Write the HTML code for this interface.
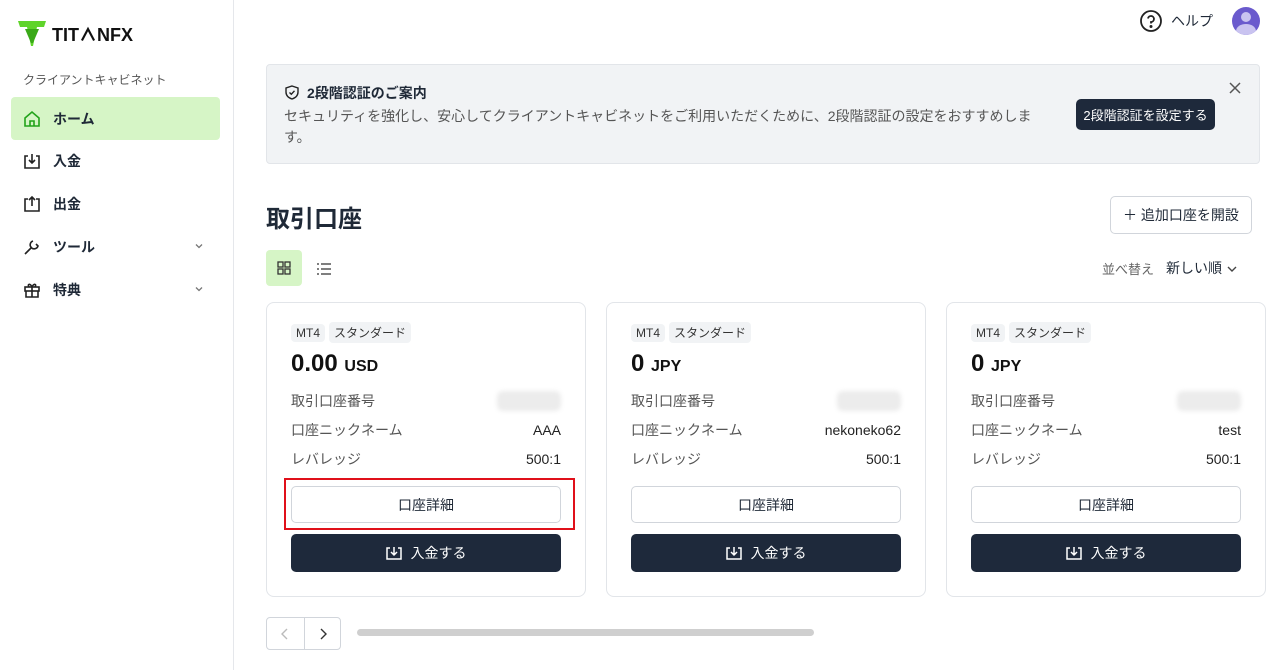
<!DOCTYPE html>
<html><head><meta charset="utf-8"><style>
*{box-sizing:border-box;margin:0;padding:0}
body{width:1278px;height:670px;overflow:hidden;background:#fff;font-family:"Liberation Sans","Noto Sans CJK JP",sans-serif;color:#1f2937;position:relative}
.side{position:absolute;left:0;top:0;width:234px;height:670px;border-right:1px solid #e5e7eb}
.logo{position:absolute;left:18px;top:21px;display:flex;align-items:center;gap:6px}
.logo b{font-size:18px;font-weight:900;letter-spacing:0;color:#111}
.cap{position:absolute;left:23px;top:71px;font-size:12px;color:#555}
.nav{position:absolute;left:11px;width:209px;height:43px;display:flex;align-items:center;padding-left:12px;font-size:14px;font-weight:bold;color:#1f2937;border-radius:4px}
.nav svg{margin-right:12px}
.nav.act{background:#d6f5c6}
.chev{position:absolute;left:182px;top:15px}
.a{position:absolute}
.banner{left:266px;top:64px;width:994px;height:100px;background:#f1f3f5;border:1px solid #e2e5e9;border-radius:4px}
.btn-dark{background:#1e293b;color:#fff;border-radius:5px;display:flex;align-items:center;justify-content:center;font-size:13px}
.card{top:302px;width:320px;height:295px;border:1px solid #e2e5e9;border-radius:8px}
.tag{display:inline-block;background:#f1f3f5;border-radius:4px;font-size:12px;padding:2px 5px;margin-right:4px;color:#333}
.row{position:absolute;left:24px;right:24px;display:flex;justify-content:space-between;font-size:14px;color:#555}
.row span:last-child{color:#222}
.blur{width:64px;height:20px;background:#ececec;border-radius:6px;filter:blur(2px)}
.det{position:absolute;left:24px;width:270px;top:183px;height:37px;border:1px solid #d1d5db;border-radius:5px;display:flex;align-items:center;justify-content:center;font-size:14px}
.dep{position:absolute;left:24px;width:270px;top:231px;height:38px;font-size:14px}
</style></head><body>
<div class="side">
 <div class="logo"><svg width="28" height="26" viewBox="0 0 28 26"><path d="M0 0H28L26 6H19L15 25H13L9 6H2Z" fill="#5fd42a"/><path d="M7 8H21L15 22H13Z" fill="#3aa918"/></svg><b>TIT∧NFX</b></div>
 <div class="cap">クライアントキャビネット</div>
 <div class="nav act" style="top:97px"><svg width="18" height="18" viewBox="0 0 18 18" fill="none" stroke="#22a31a" stroke-width="1.6"><path d="M2 8L9 2L16 8V16H2Z"/><path d="M7 16V11H11V16"/></svg>ホーム</div>
 <div class="nav" style="top:139px"><svg width="18" height="18" viewBox="0 0 18 18" fill="none" stroke="#222" stroke-width="1.6"><path d="M5 4H2V16H16V4H13"/><path d="M9 2V11M6 8L9 11L12 8"/></svg>入金</div>
 <div class="nav" style="top:182px"><svg width="18" height="18" viewBox="0 0 18 18" fill="none" stroke="#222" stroke-width="1.6"><path d="M5 4H2V16H16V4H13"/><path d="M9 11V2M6 5L9 2L12 5"/></svg>出金</div>
 <div class="nav" style="top:225px"><svg width="18" height="18" viewBox="0 0 18 18" fill="none" stroke="#222" stroke-width="1.6"><path d="M2 16L9 9M10 3A4 4 0 1 0 15 8L13 6"/></svg>ツール<svg class="chev" width="12" height="12" viewBox="0 0 12 12" fill="none" stroke="#777" stroke-width="1.3"><path d="M3 4.5L6 7.5L9 4.5"/></svg></div>
 <div class="nav" style="top:268px"><svg width="18" height="18" viewBox="0 0 18 18" fill="none" stroke="#222" stroke-width="1.6"><rect x="2" y="6" width="14" height="4"/><path d="M3 10V16H15V10M9 6V16M9 6C7 2 4 3 6 6M9 6C11 2 14 3 12 6"/></svg>特典<svg class="chev" width="12" height="12" viewBox="0 0 12 12" fill="none" stroke="#777" stroke-width="1.3"><path d="M3 4.5L6 7.5L9 4.5"/></svg></div>
</div>
<div class="a" style="left:1139px;top:9px"><svg width="24" height="24" viewBox="0 0 24 24" fill="none" stroke="#222" stroke-width="1.8"><circle cx="12" cy="12" r="10"/><path d="M9 9.5A3 3 0 1 1 12 13V14.5"/><circle cx="12" cy="17.5" r=".6" fill="#222"/></svg></div>
<div class="a" style="left:1171px;top:11px;font-size:14px">ヘルプ</div>
<div class="a" style="left:1232px;top:7px;width:28px;height:28px;border-radius:50%;background:#6a5acd;overflow:hidden"><div style="position:absolute;left:9px;top:5px;width:10px;height:10px;border-radius:50%;background:#c9c3f0"></div><div style="position:absolute;left:4px;top:17px;width:20px;height:14px;border-radius:50%;background:#c9c3f0"></div></div>
<div class="a banner">
 <div class="a" style="left:18px;top:20px"><svg width="14" height="15" viewBox="0 0 14 15" fill="none" stroke="#222" stroke-width="1.4"><path d="M7 1L13 3V7C13 11 10 13 7 14C4 13 1 11 1 7V3Z"/><path d="M4.5 7.5L6.3 9.2L9.5 5.8"/></svg></div>
 <div class="a" style="left:40px;top:18px;font-size:14px;font-weight:bold">2段階認証のご案内</div>
 <div class="a" style="left:17px;top:41px;width:760px;font-size:14px;color:#555;line-height:21px">セキュリティを強化し、安心してクライアントキャビネットをご利用いただくために、2段階認証の設定をおすすめします。</div>
 <div class="a btn-dark" style="left:809px;top:34px;width:139px;height:31px">2段階認証を設定する</div>
 <div class="a" style="left:962px;top:16px"><svg width="12" height="12" viewBox="0 0 12 12" stroke="#555" stroke-width="1.5"><path d="M1 1L11 11M11 1L1 11"/></svg></div>
</div>
<div class="a" style="left:266px;top:199px;font-size:24px;font-weight:bold">取引口座</div>
<div class="a" style="left:1110px;top:196px;width:142px;height:38px;border:1px solid #d1d5db;border-radius:5px;font-size:14px;display:flex;align-items:center;justify-content:center">＋ 追加口座を開設</div>
<div class="a" style="left:266px;top:250px;width:36px;height:36px;background:#d6f5c6;border-radius:4px"><svg style="position:absolute;left:11px;top:11px" width="14" height="14" viewBox="0 0 14 14" fill="none" stroke="#333" stroke-width="1.3"><rect x="1" y="1" width="5" height="5"/><rect x="8" y="1" width="5" height="5"/><rect x="1" y="8" width="5" height="5"/><rect x="8" y="8" width="5" height="5"/></svg></div>
<div class="a" style="left:317px;top:262px"><svg width="14" height="12" viewBox="0 0 14 12" stroke="#333" stroke-width="1.3"><path d="M4 1H14M4 6H14M4 11H14M0 1H2M0 6H2M0 11H2"/></svg></div>
<div class="a" style="left:1102px;top:259px;font-size:13px;color:#666">並べ替え</div>
<div class="a" style="left:1166px;top:258px;font-size:14px">新しい順</div>
<div class="a" style="left:1226px;top:262px"><svg width="12" height="12" viewBox="0 0 12 12" fill="none" stroke="#444" stroke-width="1.4"><path d="M2 4L6 8L10 4"/></svg></div>

<div class="a card" style="left:266px">
 <div class="a" style="left:24px;top:19px"><span class="tag">MT4</span><span class="tag">スタンダード</span></div>
 <div class="a" style="left:24px;top:47px;font-size:24px;font-weight:bold;color:#111">0.00 <span style="font-size:16px">USD</span></div>
 <div class="row" style="top:88px"><span>取引口座番号</span><div class="blur"></div></div>
 <div class="row" style="top:117px"><span>口座ニックネーム</span><span style="margin-top:2px">AAA</span></div>
 <div class="row" style="top:146px"><span>レバレッジ</span><span style="margin-top:2px">500:1</span></div>
 <div class="det">口座詳細</div>
 <div class="dep btn-dark"><svg width="16" height="14" viewBox="0 0 16 14" fill="none" stroke="#fff" stroke-width="1.5" style="margin-right:9px"><path d="M4 2H1V13H15V2H12"/><path d="M8 1V9M5 6L8 9L11 6"/></svg>入金する</div>
</div>
<div class="a" style="left:284px;top:478px;width:291px;height:52px;border:2.5px solid #e0101a"></div>
<div class="a card" style="left:606px">
 <div class="a" style="left:24px;top:19px"><span class="tag">MT4</span><span class="tag">スタンダード</span></div>
 <div class="a" style="left:24px;top:47px;font-size:24px;font-weight:bold;color:#111">0 <span style="font-size:16px">JPY</span></div>
 <div class="row" style="top:88px"><span>取引口座番号</span><div class="blur"></div></div>
 <div class="row" style="top:117px"><span>口座ニックネーム</span><span style="margin-top:2px">nekoneko62</span></div>
 <div class="row" style="top:146px"><span>レバレッジ</span><span style="margin-top:2px">500:1</span></div>
 <div class="det">口座詳細</div>
 <div class="dep btn-dark"><svg width="16" height="14" viewBox="0 0 16 14" fill="none" stroke="#fff" stroke-width="1.5" style="margin-right:9px"><path d="M4 2H1V13H15V2H12"/><path d="M8 1V9M5 6L8 9L11 6"/></svg>入金する</div>
</div>
<div class="a card" style="left:946px">
 <div class="a" style="left:24px;top:19px"><span class="tag">MT4</span><span class="tag">スタンダード</span></div>
 <div class="a" style="left:24px;top:47px;font-size:24px;font-weight:bold;color:#111">0 <span style="font-size:16px">JPY</span></div>
 <div class="row" style="top:88px"><span>取引口座番号</span><div class="blur"></div></div>
 <div class="row" style="top:117px"><span>口座ニックネーム</span><span style="margin-top:2px">test</span></div>
 <div class="row" style="top:146px"><span>レバレッジ</span><span style="margin-top:2px">500:1</span></div>
 <div class="det">口座詳細</div>
 <div class="dep btn-dark"><svg width="16" height="14" viewBox="0 0 16 14" fill="none" stroke="#fff" stroke-width="1.5" style="margin-right:9px"><path d="M4 2H1V13H15V2H12"/><path d="M8 1V9M5 6L8 9L11 6"/></svg>入金する</div>
</div>
<div class="a" style="left:266px;top:617px;width:75px;height:33px;border:1px solid #d1d5db;border-radius:4px"><div style="position:absolute;left:37px;top:0;width:1px;height:31px;background:#d1d5db"></div>
<svg style="position:absolute;left:13px;top:10px" width="10" height="12" viewBox="0 0 10 12" fill="none" stroke="#bbb" stroke-width="1.4"><path d="M7 1L2 6L7 11"/></svg>
<svg style="position:absolute;left:51px;top:10px" width="10" height="12" viewBox="0 0 10 12" fill="none" stroke="#333" stroke-width="1.4"><path d="M3 1L8 6L3 11"/></svg></div>
<div class="a" style="left:357px;top:629px;width:457px;height:7px;background:#cfcfcf;border-radius:4px"></div>
</body></html>
